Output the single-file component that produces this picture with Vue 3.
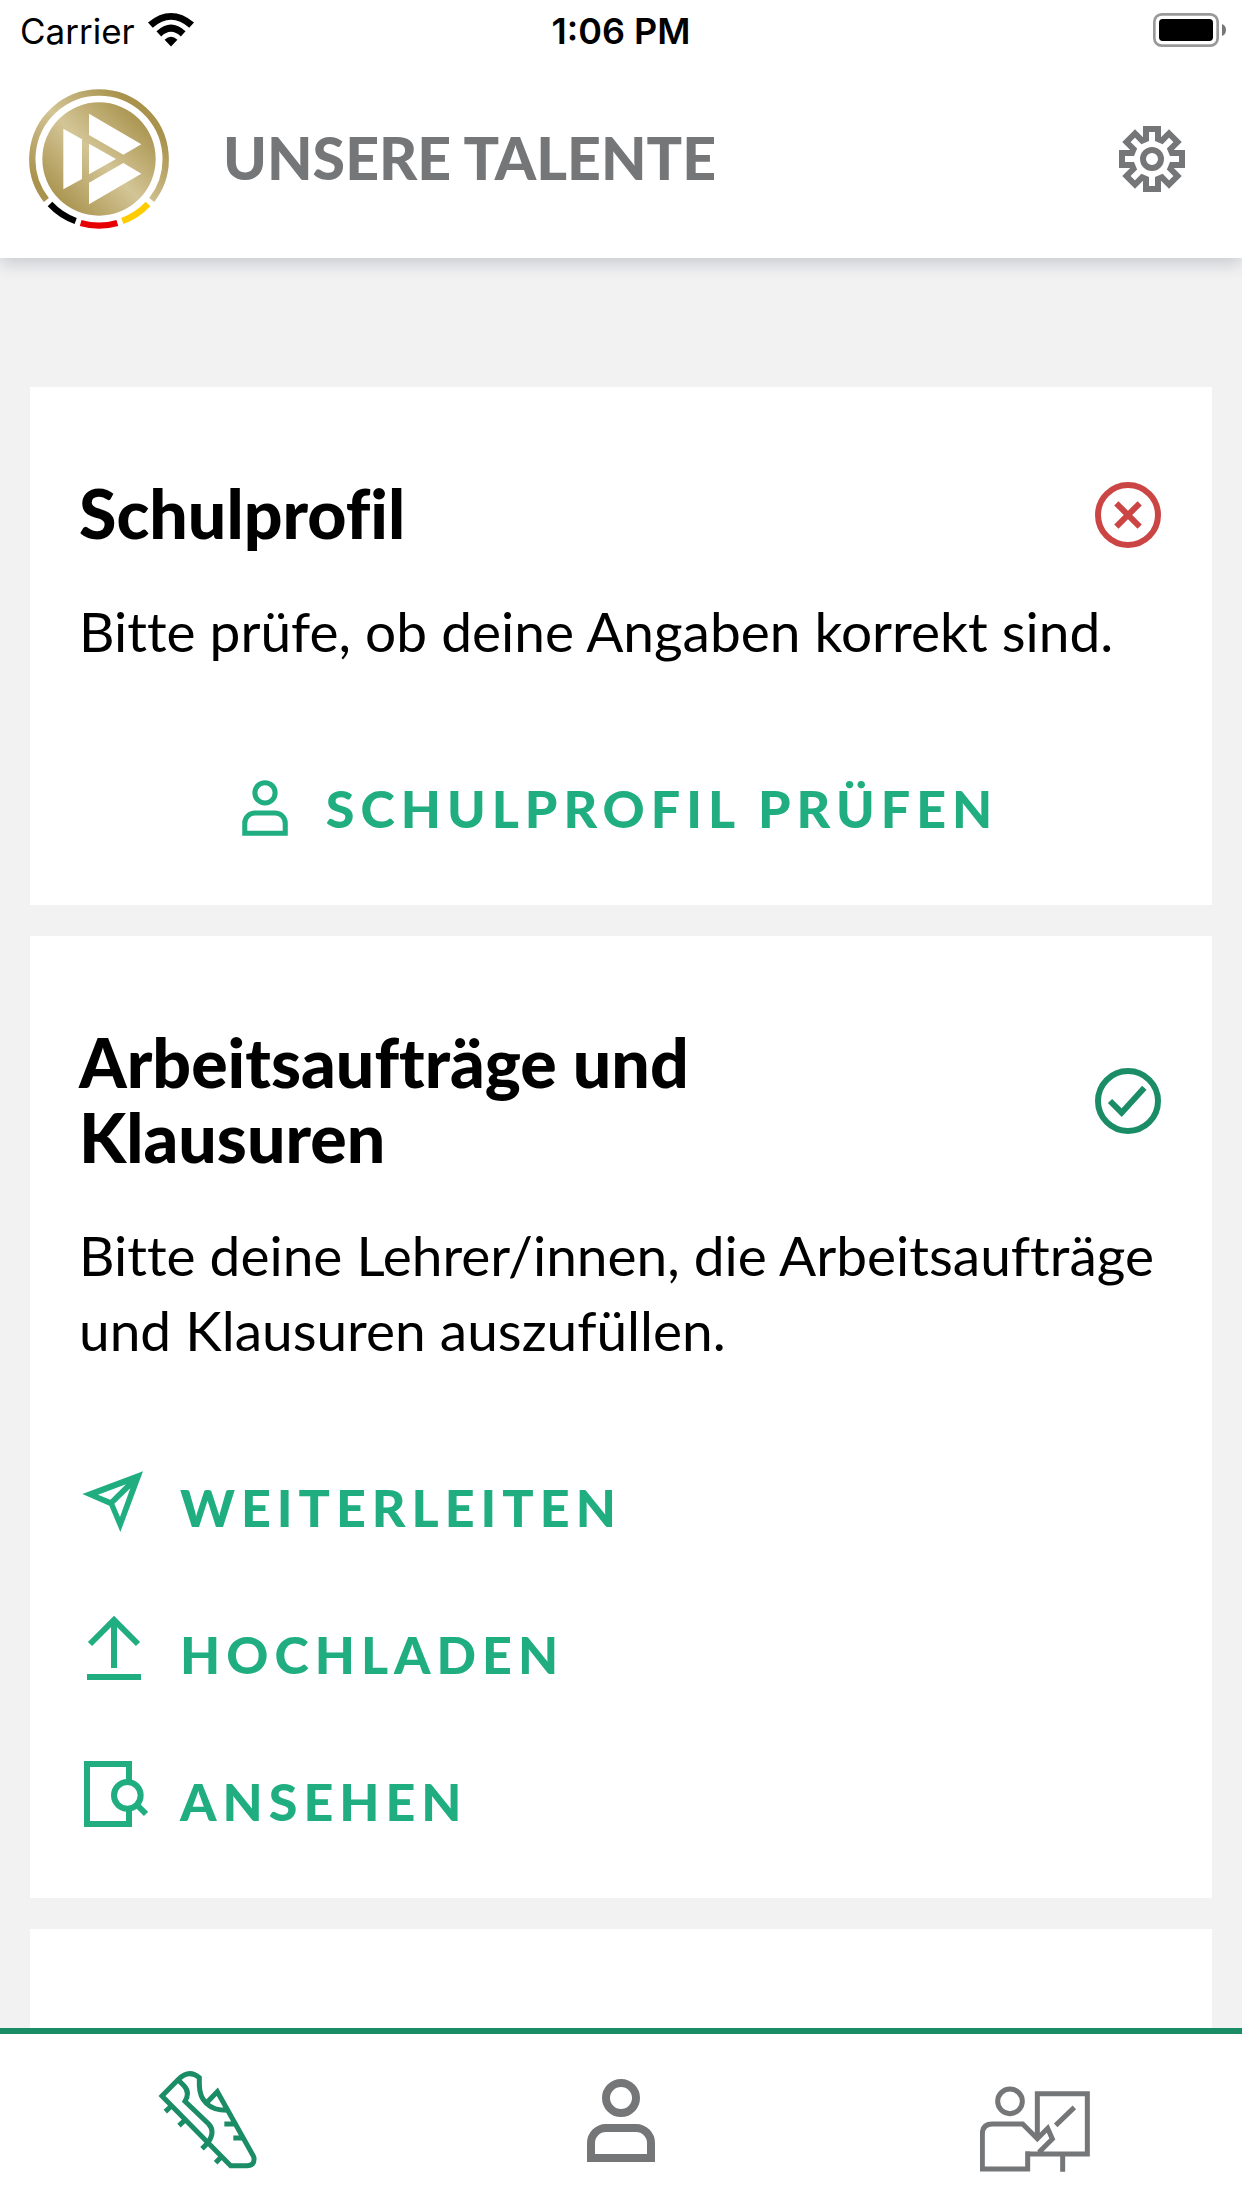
<script setup>
const actions = [
  { id: 'send', label: 'Weiterleiten' },
  { id: 'upload', label: 'Hochladen' },
  { id: 'view', label: 'Ansehen' },
]
</script>

<template>
  <div class="app">
    <header class="header">
      <div class="status-bar">
        <div class="carrier">
          <span>Carrier</span>
          <svg class="wifi" viewBox="0 0 136 100" aria-hidden="true">
            <path d="M0 28Q68-28 136 28L122 43Q68-4 14 43ZM25 54Q68 14 111 54L97 69Q68 42 39 69ZM49 79Q68 61 87 79L68 99Z" />
          </svg>
        </div>
        <span class="time">1:06 PM</span>
        <div class="battery-slot">
          <svg class="battery" viewBox="0 0 219 102" aria-hidden="true">
            <rect x="4" y="4" width="190" height="94" rx="22" fill="none" stroke="#999" stroke-width="8" />
            <rect x="18" y="18" width="162" height="66" rx="11" />
            <path d="M207 33Q219 38 219 51T207 69Z" fill="#777" />
          </svg>
        </div>
      </div>
      <div class="title-bar">
        <svg class="logo" viewBox="27 27 420 420" role="img" aria-label="DFB">
          <defs>
            <linearGradient id="gold" gradientUnits="userSpaceOnUse" x1="367" y1="107" x2="107" y2="367">
              <stop offset="0" stop-color="#a8924c" />
              <stop offset="0.5" stop-color="#d3c596" />
              <stop offset="1" stop-color="#a8924c" />
            </linearGradient>
          </defs>
          <path d="M79 360A200 200 0 1 1 395 360" fill="none" stroke="url(#gold)" stroke-width="19" />
          <circle cx="237" cy="237" r="170" fill="url(#gold)" />
          <path d="M130 146 186 178V297L130 328ZM207 101 364 193 310 224 207 165ZM207 191 288 237 207 283ZM207 373 364 281 310 249 207 308Z" fill="#fff" />
          <g fill="none" stroke-width="19">
            <path d="M90 372A199 199 0 0 0 167 423" stroke="#000" />
            <path d="M182 429A199 199 0 0 0 292 429" stroke="#e60000" />
            <path d="M307 423A199 199 0 0 0 384 372" stroke="#fc0" />
          </g>
        </svg>
        <h1>UNSERE TALENTE</h1>
        <button class="icon-button" type="button" aria-label="Einstellungen">
          <svg class="gear" viewBox="-33 -33 66 66" fill="none" stroke="currentColor" stroke-width="6">
            <path d="M-6-20V-30H6V-20L9.9-18.4 17-25.5 25.5-17 18.4-9.9 20-6H30V6H20L18.4 9.9 25.5 17 17 25.5 9.9 18.4 6 20V30H-6V20L-9.9 18.4-17 25.5-25.5 17-18.4 9.9-20 6H-30V-6H-20L-18.4-9.9-25.5-17-17-25.5-9.9-18.4Z" />
            <circle r="9" />
          </svg>
        </button>
      </div>
    </header>

    <main class="content">
      <section class="card">
        <div class="card-head">
          <h2>Schulprofil</h2>
          <svg class="state error" viewBox="0 0 198 198" role="img" aria-label="Offen">
            <circle cx="99" cy="99" r="90" />
            <path d="M64 64 134 134M134 64 64 134" />
          </svg>
        </div>
        <p>Bitte prüfe, ob deine Angaben korrekt sind.</p>
        <div class="actions centered">
          <button class="action" type="button">
            <svg class="person" viewBox="0 0 136 166" aria-hidden="true">
              <circle cx="68" cy="38" r="30" />
              <path d="M8 158V128A30 30 0 0 1 38 98H98A30 30 0 0 1 128 128V158Z" />
            </svg>
            <span>SCHULPROFIL PRÜFEN</span>
          </button>
        </div>
      </section>

      <section class="card">
        <div class="card-head">
          <h2>Arbeitsaufträge und Klausuren</h2>
          <svg class="state done" viewBox="0 0 198 198" role="img" aria-label="Erledigt">
            <circle cx="99" cy="99" r="90" />
            <path d="M45 99 80 134 148 59" />
          </svg>
        </div>
        <p>Bitte deine Lehrer/innen, die Arbeitsaufträge und Klausuren auszufüllen.</p>
        <div class="actions">
          <button v-for="action in actions" :key="action.id" class="action raised" type="button">
            <svg v-if="action.id === 'send'" class="glyph" viewBox="66 50 198 198" aria-hidden="true">
              <path class="solid" fill-rule="evenodd" d="M67 131 249 63 181 245 148 166ZM114 133 151 148 198 102ZM211 114 163 160 180 200Z" />
            </svg>
            <svg v-else-if="action.id === 'upload'" class="glyph" viewBox="66 492 198 198" aria-hidden="true">
              <path d="M90 582 162 510 234 582M162 512V654M81 681H243" />
            </svg>
            <svg v-else class="glyph" viewBox="66 933 198 198" aria-hidden="true">
              <path d="M207 990V942H81V1122H207V1082M234 1068 258 1092" />
              <circle cx="202" cy="1036" r="40" />
            </svg>
            <span>{{ action.label.toUpperCase() }}</span>
          </button>
        </div>
      </section>

      <section class="card upcoming"></section>
    </main>

    <nav class="tabs">
      <a href="#training" class="active" aria-label="Training">
        <svg class="shoe" viewBox="50 60 300 300">
          <path d="M177 108V83Q146 56 113 89L65 138 271 347H320Q343 347 341 324L339 318 231 125 198 159M177 106C178 150 205 182 262 181M113 89 131 107Q150 127 134 154L205 222Q226 245 203 278M93 168 75 185M134 210 116 227M203 278 185 296M243 320 226 338M252 222H285M279 264H309" />
        </svg>
      </a>
      <a href="#profil" aria-label="Profil">
        <svg class="profile" viewBox="0 0 136 166">
          <circle cx="68" cy="38" r="30" />
          <path d="M8 158V128A30 30 0 0 1 38 98H98A30 30 0 0 1 128 128V158Z" />
        </svg>
      </a>
      <a href="#schule" aria-label="Schule">
        <svg class="teacher" viewBox="60 15 330 330">
          <circle cx="150" cy="124" r="37" />
          <path d="M203 274V327H67V222Q67 192 97 192H188L232 236 263 205 277 237 237 277M232 232V101H382V282H196M308 282V335M287 196 343 142" />
        </svg>
      </a>
    </nav>
  </div>
</template>

<style>
body {
  margin: 0;
}
</style>

<style scoped>
.app {
  display: flex;
  flex-direction: column;
  height: 100vh;
  overflow: hidden;
  background: #f2f2f2;
  color: #000;
  font-family: Lato, "Noto Sans", sans-serif;
  font-variant-ligatures: none;
}

.header {
  position: relative;
  z-index: 1;
  background: #fff;
  box-shadow: 0 6px 16px rgba(40, 50, 80, 0.2);
}

.status-bar {
  display: grid;
  grid-template-columns: 1fr auto 1fr;
  align-items: center;
  height: 60px;
  padding: 0 16px;
  font: 36px/58px Inter, "Liberation Sans", sans-serif;
}

.status-bar span {
  padding-top: 2px;
}

.carrier {
  display: flex;
  align-items: center;
  gap: 13px;
  padding-left: 4px;
  font-size: 35px;
}

.wifi {
  width: 46px;
  height: 34px;
}

.time {
  font-weight: 600;
}

.battery-slot {
  display: flex;
  justify-content: flex-end;
}

.battery {
  width: 73px;
  height: 34px;
}

.title-bar {
  display: flex;
  align-items: center;
  height: 198px;
  padding: 0 57px 0 29px;
}

.logo {
  width: 140px;
  height: 140px;
}

h1,
h2,
p {
  margin: 0;
}

h1 {
  flex: 1;
  margin-left: 54px;
  padding-bottom: 4px;
  color: #757678;
  font-size: 59px;
  line-height: 75px;
  font-weight: 900;
}

button {
  padding: 0;
  border: 0;
  background: none;
  font: inherit;
  cursor: pointer;
}

.icon-button {
  display: flex;
  color: #757678;
}

.gear {
  width: 66px;
  height: 66px;
}

.content {
  flex: 1;
  display: flex;
  flex-direction: column;
  gap: 31px;
  min-height: 0;
  padding: 129px 30px 0;
  overflow: hidden;
}

.card {
  flex: none;
  padding: 88px 51px 57px 49px;
  background: #fff;
}

.upcoming {
  min-height: 400px;
}

.card-head {
  display: flex;
  align-items: center;
  justify-content: space-between;
}

h2 {
  max-width: 75%;
  padding-bottom: 4px;
  font-size: 68px;
  line-height: 75px;
  font-weight: 900;
}

.state {
  width: 66px;
  height: 66px;
  fill: none;
  stroke: currentColor;
  stroke-width: 18px;
}

.error {
  color: #cc4545;
}

.done {
  color: #1a8c66;
}

p {
  margin-top: 40px;
  font-size: 55px;
  line-height: 75px;
}

.actions {
  display: flex;
  flex-direction: column;
  align-items: flex-start;
  gap: 67px;
  margin-top: 99px;
}

.centered {
  align-items: center;
}

.action {
  display: flex;
  align-items: center;
  gap: 38px;
  color: #20ae80;
  font-size: 52px;
  line-height: 80px;
  font-weight: 900;
  letter-spacing: 6px;
}

.raised {
  align-items: flex-start;
  gap: 32px;
  padding-left: 3px;
}

.action svg {
  fill: none;
  stroke: currentColor;
}

.action .person {
  width: 46px;
  height: 56px;
  stroke-width: 15px;
}

.action .glyph {
  width: 66px;
  height: 66px;
  stroke-width: 18px;
}

.action .solid {
  fill: currentColor;
  stroke: none;
}

.tabs {
  display: grid;
  grid-template-columns: repeat(3, 1fr);
  height: 174px;
  border-top: 6px solid #1a8c66;
  background: #fff;
}

.tabs a {
  display: flex;
  align-items: center;
  justify-content: center;
  padding-bottom: 2px;
  color: #757678;
}

.tabs .active {
  color: #1a8c66;
}

.tabs svg {
  fill: none;
  stroke: currentColor;
  stroke-width: 15px;
}

.tabs .profile {
  stroke-width: 16px;
}

.shoe {
  width: 100px;
  height: 100px;
}

.profile {
  width: 68px;
  height: 83px;
}

.teacher {
  width: 110px;
  height: 110px;
}
</style>
